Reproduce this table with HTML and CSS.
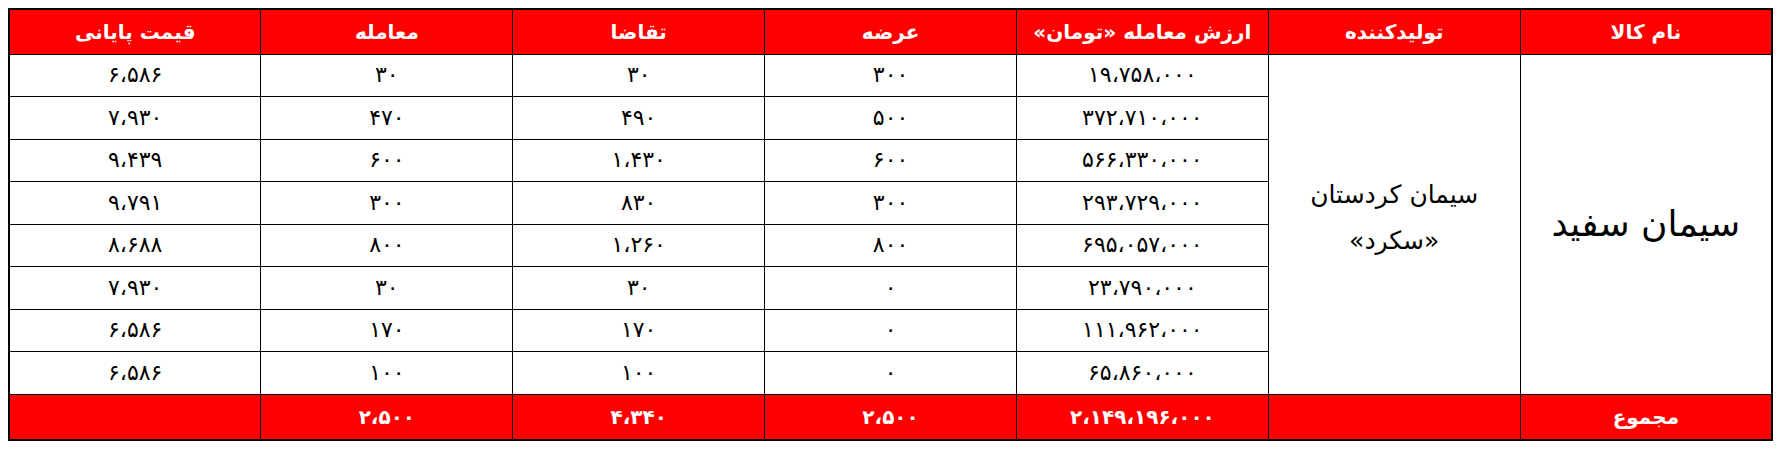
FILE: index.html
```html
<!DOCTYPE html>
<html lang="fa" dir="rtl">
<head>
<meta charset="utf-8">
<title>جدول معاملات سیمان</title>
<link rel="stylesheet" href="styles.css">
</head>
<body>
<table class="trade-table">
  <thead>
    <tr class="head-row">
      <th>نام کالا</th>
      <th>تولیدکننده</th>
      <th>ارزش معامله «تومان»</th>
      <th>عرضه</th>
      <th>تقاضا</th>
      <th>معامله</th>
      <th>قیمت پایانی</th>
    </tr>
  </thead>
  <tbody>
    <tr>
      <td class="product" rowspan="8">سیمان سفید</td>
      <td class="maker" rowspan="8">سیمان کردستان<br>«سکرد»</td>
      <td>۱۹،۷۵۸،۰۰۰</td><td>۳۰۰</td><td>۳۰</td><td>۳۰</td><td>۶،۵۸۶</td>
    </tr>
    <tr><td>۳۷۲،۷۱۰،۰۰۰</td><td>۵۰۰</td><td>۴۹۰</td><td>۴۷۰</td><td>۷،۹۳۰</td></tr>
    <tr><td>۵۶۶،۳۳۰،۰۰۰</td><td>۶۰۰</td><td>۱،۴۳۰</td><td>۶۰۰</td><td>۹،۴۳۹</td></tr>
    <tr><td>۲۹۳،۷۲۹،۰۰۰</td><td>۳۰۰</td><td>۸۳۰</td><td>۳۰۰</td><td>۹،۷۹۱</td></tr>
    <tr><td>۶۹۵،۰۵۷،۰۰۰</td><td>۸۰۰</td><td>۱،۲۶۰</td><td>۸۰۰</td><td>۸،۶۸۸</td></tr>
    <tr><td>۲۳،۷۹۰،۰۰۰</td><td>۰</td><td>۳۰</td><td>۳۰</td><td>۷،۹۳۰</td></tr>
    <tr><td>۱۱۱،۹۶۲،۰۰۰</td><td>۰</td><td>۱۷۰</td><td>۱۷۰</td><td>۶،۵۸۶</td></tr>
    <tr><td>۶۵،۸۶۰،۰۰۰</td><td>۰</td><td>۱۰۰</td><td>۱۰۰</td><td>۶،۵۸۶</td></tr>
  </tbody>
  <tfoot>
    <tr class="foot-row">
      <td>مجموع</td>
      <td></td>
      <td>۲،۱۴۹،۱۹۶،۰۰۰</td>
      <td>۲،۵۰۰</td>
      <td>۴،۳۴۰</td>
      <td>۲،۵۰۰</td>
      <td></td>
    </tr>
  </tfoot>
</table>
</body>
</html>
```
FILE: styles.css
```css
html, body {
  background: #ffffff;
}
body {
  margin: 8px;
  font-family: "DejaVu Sans", "Noto Sans", sans-serif;
  color: #000000;
}
.trade-table {
  width: 100%;
  border-collapse: collapse;
  table-layout: fixed;
  border: 2px solid #000;
}
.trade-table th,
.trade-table td {
  border: 1px solid #000;
  text-align: center;
  vertical-align: middle;
  padding: 0 4px;
  font-size: 22px;
  line-height: 1.1;
}
.head-row {
  height: 45px;
}
.head-row th {
  background: #ff0000;
  color: #ffffff;
  font-weight: bold;
  font-size: 20px;
}
.trade-table tbody tr {
  height: 42.5px;
}
.trade-table .product {
  font-size: 36px;
}
.trade-table .maker {
  font-size: 25px;
  line-height: 1.85;
  padding-bottom: 12px;
}
.foot-row {
  height: 46px;
}
.foot-row td {
  background: #ff0000;
  color: #ffffff;
  font-weight: bold;
  font-size: 20px;
}
```
